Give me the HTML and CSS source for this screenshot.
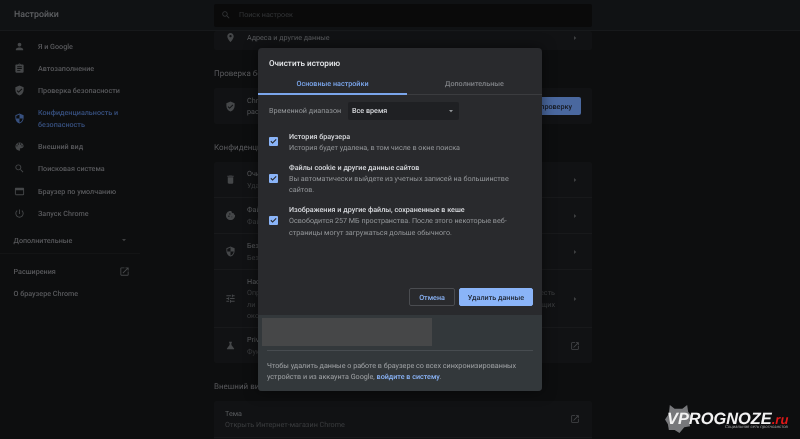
FILE: index.html
```html
<!DOCTYPE html>
<html lang="ru">
<head>
	<meta charset="UTF-8">
	<title>Настройки</title>
	<link rel="stylesheet" href="styles.css">
</head>
<body>
	<svg class="defs" width="0" height="0">
		<symbol id="i-person" viewBox="0 0 24 24"><path d="M12 12c2.21 0 4-1.79 4-4s-1.79-4-4-4-4 1.79-4 4 1.79 4 4 4zm0 2c-2.67 0-8 1.34-8 4v2h16v-2c0-2.66-5.33-4-8-4z"/></symbol>
		<symbol id="i-assignment" viewBox="0 0 24 24"><path d="M19 3h-4.18C14.4 1.84 13.3 1 12 1s-2.4.84-2.82 2H5c-1.1 0-2 .9-2 2v14c0 1.1.9 2 2 2h14c1.1 0 2-.9 2-2V5c0-1.1-.9-2-2-2zm-7 0c.55 0 1 .45 1 1s-.45 1-1 1-1-.45-1-1 .45-1 1-1zm2 14H7v-2h7v2zm3-4H7v-2h10v2zm0-4H7V7h10v2z"/></symbol>
		<symbol id="i-verified" viewBox="0 0 24 24"><path d="M12 1L3 5v6c0 5.55 3.84 10.74 9 12 5.16-1.26 9-6.45 9-12V5l-9-4zm-2 16l-4-4 1.41-1.41L10 14.17l6.59-6.59L18 9l-8 8z"/></symbol>
		<symbol id="i-security" viewBox="0 0 24 24"><path d="M12 1L3 5v6c0 5.55 3.84 10.74 9 12 5.16-1.26 9-6.45 9-12V5l-9-4zm0 10.99h7c-.53 4.12-3.28 7.79-7 8.94V12H5V6.3l7-3.11v8.8z"/></symbol>
		<symbol id="i-palette" viewBox="0 0 24 24"><path d="M12 3c-4.97 0-9 4.03-9 9s4.03 9 9 9c.83 0 1.5-.67 1.5-1.5 0-.39-.15-.74-.39-1.01-.23-.26-.38-.61-.38-.99 0-.83.67-1.5 1.5-1.5H16c2.76 0 5-2.24 5-5 0-4.42-4.03-8-9-8zm-5.5 9c-.83 0-1.5-.67-1.5-1.5S5.67 9 6.5 9 8 9.67 8 10.5 7.33 12 6.5 12zm3-4C8.67 8 8 7.33 8 6.5S8.67 5 9.5 5s1.5.67 1.5 1.5S10.33 8 9.5 8zm5 0c-.83 0-1.5-.67-1.5-1.5S13.67 5 14.5 5s1.5.67 1.5 1.5S15.33 8 14.5 8zm3 4c-.83 0-1.5-.67-1.5-1.5S16.67 9 17.5 9s1.5.67 1.5 1.5-.67 1.5-1.5 1.5z"/></symbol>
		<symbol id="i-search" viewBox="0 0 24 24"><path d="M15.5 14h-.79l-.28-.27C15.41 12.59 16 11.11 16 9.5 16 5.91 13.09 3 9.5 3S3 5.91 3 9.5 5.91 16 9.5 16c1.61 0 3.09-.59 4.23-1.57l.27.28v.79l5 4.99L20.49 19l-4.99-5zm-6 0C7.01 14 5 11.99 5 9.5S7.01 5 9.5 5 14 7.01 14 9.5 11.99 14 9.5 14z"/></symbol>
		<symbol id="i-web" viewBox="0 0 24 24"><path d="M20 4H4c-1.11 0-2 .9-2 2v12c0 1.1.89 2 2 2h16c1.1 0 2-.9 2-2V6c0-1.1-.89-2-2-2zm0 14H4V9h16v9z"/></symbol>
		<symbol id="i-power" viewBox="0 0 24 24"><path d="M13 3h-2v10h2V3zm4.83 2.17l-1.42 1.42C17.99 7.86 19 9.81 19 12c0 3.87-3.13 7-7 7s-7-3.13-7-7c0-2.19 1.01-4.14 2.58-5.42L6.17 5.17C4.23 6.82 3 9.26 3 12c0 4.97 4.03 9 9 9s9-4.03 9-9c0-2.74-1.23-5.18-3.17-6.83z"/></symbol>
		<symbol id="i-open" viewBox="0 0 24 24"><path d="M19 19H5V5h7V3H5c-1.11 0-2 .9-2 2v14c0 1.1.89 2 2 2h14c1.1 0 2-.9 2-2v-7h-2v7zM14 3v2h3.59l-9.83 9.83 1.41 1.41L19 6.41V10h2V3h-7z"/></symbol>
		<symbol id="i-place" viewBox="0 0 24 24"><path d="M12 2C8.13 2 5 5.13 5 9c0 5.25 7 13 7 13s7-7.75 7-13c0-3.87-3.13-7-7-7zm0 9.5c-1.38 0-2.5-1.12-2.5-2.5s1.12-2.5 2.5-2.5 2.5 1.12 2.5 2.5-1.12 2.5-2.5 2.5z"/></symbol>
		<symbol id="i-delete" viewBox="0 0 24 24"><path d="M6 19c0 1.1.9 2 2 2h8c1.1 0 2-.9 2-2V7H6v12zM19 4h-3.5l-1-1h-5l-1 1H5v2h14V4z"/></symbol>
		<symbol id="i-cookie" viewBox="0 0 24 24"><path d="M21.95 10.99c-1.79-.03-3.7-1.95-2.68-4.22-2.98 1-5.77-1.59-5.19-4.56C6.95.71 2 6.58 2 12c0 5.52 4.48 10 10 10 5.89 0 10.54-5.08 9.95-11.01zM8.5 15c-.83 0-1.5-.67-1.5-1.5S7.67 12 8.5 12s1.5.67 1.5 1.5S9.33 15 8.5 15zm2-5C9.67 10 9 9.33 9 8.5S9.67 7 10.5 7s1.5.67 1.5 1.5-.67 1.5-1.5 1.5zm4.5 6c-.55 0-1-.45-1-1s.45-1 1-1 1 .45 1 1-.45 1-1 1z"/></symbol>
		<symbol id="i-tune" viewBox="0 0 24 24"><path d="M3 17v2h6v-2H3zM3 5v2h10V5H3zm10 16v-2h8v-2h-8v-2h-2v6h2zM7 9v2H3v2h4v2h2V9H7zm14 4v-2H11v2h10zm-6-4h2V7h4V5h-4V3h-2v6z"/></symbol>
		<symbol id="i-flask" viewBox="0 0 24 24"><path d="M19.8 18.4L14 10.67V6.5l1.35-1.69c.26-.33.03-.81-.39-.81H9.04c-.42 0-.65.48-.39.81L10 6.5v4.17L4.2 18.4c-.49.66-.02 1.6.8 1.6h14c.82 0 1.29-.94.8-1.6z"/></symbol>
		<symbol id="i-right" viewBox="0 0 24 24"><path d="M9 6l7 6-7 6z"/></symbol>
		<symbol id="i-down" viewBox="0 0 24 24"><path d="M6 9l6 7 6-7z"/></symbol>
		<symbol id="i-check" viewBox="0 0 24 24"><path d="M9.5 18.2L3.8 12.5l2.2-2.2 3.5 3.5 8.5-8.5 2.2 2.2z"/></symbol>
	</svg>

	<div class="page">
		<header class="topbar">
			<div class="topbar-title">Настройки</div>
			<div class="search">
				<svg class="icon-sm"><use href="#i-search"/></svg>
				<span>Поиск настроек</span>
			</div>
		</header>

		<div class="main">
			<aside class="sidebar">
				<nav class="nav">
					<a class="nav-item"><svg class="icon"><use href="#i-person"/></svg><span>Я и Google</span></a>
					<a class="nav-item"><svg class="icon"><use href="#i-assignment"/></svg><span>Автозаполнение</span></a>
					<a class="nav-item"><svg class="icon"><use href="#i-verified"/></svg><span>Проверка безопасности</span></a>
					<a class="nav-item active"><svg class="icon"><use href="#i-security"/></svg><span>Конфиденциальность и безопасность</span></a>
					<a class="nav-item"><svg class="icon"><use href="#i-palette"/></svg><span>Внешний вид</span></a>
					<a class="nav-item"><svg class="icon"><use href="#i-search"/></svg><span>Поисковая система</span></a>
					<a class="nav-item"><svg class="icon"><use href="#i-web"/></svg><span>Браузер по умолчанию</span></a>
					<a class="nav-item"><svg class="icon"><use href="#i-power"/></svg><span>Запуск Chrome</span></a>
					<a class="nav-more"><span>Дополнительные</span><svg class="icon-xs"><use href="#i-down"/></svg></a>
					<a class="nav-link nav-link-first"><span>Расширения</span><svg class="icon"><use href="#i-open"/></svg></a>
					<a class="nav-link"><span>О браузере Chrome</span></a>
				</nav>
			</aside>

			<main class="content">
				<div class="card">
					<div class="row row-cut">
						<svg class="icon"><use href="#i-place"/></svg>
						<div class="row-text"><div class="row-title">Адреса и другие данные</div></div>
						<svg class="icon-xs"><use href="#i-right"/></svg>
					</div>
				</div>

				<h2 class="section-title">Проверка безопасности</h2>
				<div class="card">
					<div class="row">
						<svg class="icon"><use href="#i-verified"/></svg>
						<div class="row-text"><div class="row-title">Chrome поможет защитить вас от утечки данных,<br>расширений и других угроз.</div></div>
						<button class="check-btn">Выполнить проверку</button>
					</div>
				</div>

				<h2 class="section-title">Конфиденциальность и безопасность</h2>
				<div class="card">
					<div class="row row-first">
						<svg class="icon"><use href="#i-delete"/></svg>
						<div class="row-text"><div class="row-title">Очистить историю</div><div class="row-sub">Удалить файлы cookie и данные сайтов, очистить историю и кеш</div></div>
						<svg class="icon-xs"><use href="#i-right"/></svg>
					</div>
					<div class="row">
						<svg class="icon"><use href="#i-cookie"/></svg>
						<div class="row-text"><div class="row-title">Файлы cookie и другие данные сайтов</div><div class="row-sub">Файлы cookie сторонних сайтов заблокированы в режиме инкогнито</div></div>
						<svg class="icon-xs"><use href="#i-right"/></svg>
					</div>
					<div class="row">
						<svg class="icon"><use href="#i-security"/></svg>
						<div class="row-text"><div class="row-title">Безопасность</div><div class="row-sub">Безопасный просмотр и другие настройки безопасности</div></div>
						<svg class="icon-xs"><use href="#i-right"/></svg>
					</div>
					<div class="row row-tall">
						<svg class="icon"><use href="#i-tune"/></svg>
						<div class="row-text">
							<div class="row-title">Настройки сайтов</div>
							<div class="row-sub row-line">Определяет, какие данные могут использовать сайты, что они могут показывать, есть</div>
							<div class="row-sub row-line">ли у них доступ к местоположению и к камере, могут ли они показывать всплывающих</div>
							<div class="row-sub">окон и другое</div>
						</div>
						<svg class="icon-xs"><use href="#i-right"/></svg>
					</div>
					<div class="row">
						<svg class="icon"><use href="#i-flask"/></svg>
						<div class="row-text"><div class="row-title">Privacy Sandbox</div><div class="row-sub">Функции находятся на этапе тестирования</div></div>
						<svg class="icon-open"><use href="#i-open"/></svg>
					</div>
				</div>

				<h2 class="section-title">Внешний вид</h2>
				<div class="card">
					<div class="row">
						<div class="row-text"><div class="row-title">Тема</div><div class="row-sub">Открыть Интернет-магазин Chrome</div></div>
						<svg class="icon-open"><use href="#i-open"/></svg>
					</div>
					<div class="row"></div>
				</div>
			</main>
		</div>

		<div class="dialog">
			<div class="dialog-title">Очистить историю</div>
			<div class="tabs">
				<div class="tab active">Основные настройки</div>
				<div class="tab">Дополнительные</div>
			</div>
			<div class="dialog-body">
				<div class="range">
					<span class="range-label">Временной диапазон</span>
					<div class="select"><span>Все время</span><svg class="icon-xs"><use href="#i-down"/></svg></div>
				</div>
				<div class="option">
					<span class="checkbox"><svg><use href="#i-check"/></svg></span>
					<div class="option-text">
						<div class="option-title">История браузера</div>
						<div class="option-sub">История будет удалена, в том числе в окне поиска</div>
					</div>
				</div>
				<div class="option">
					<span class="checkbox"><svg><use href="#i-check"/></svg></span>
					<div class="option-text">
						<div class="option-title">Файлы cookie и другие данные сайтов</div>
						<div class="option-sub">Вы автоматически выйдете из учетных записей на большинстве сайтов.</div>
					</div>
				</div>
				<div class="option">
					<span class="checkbox"><svg><use href="#i-check"/></svg></span>
					<div class="option-text">
						<div class="option-title">Изображения и другие файлы, сохраненные в кеше</div>
						<div class="option-sub">Освободится 257 МБ пространства. После этого некоторые веб-страницы могут загружаться дольше обычного.</div>
					</div>
				</div>
			</div>
			<div class="dialog-actions">
				<button class="btn">Отмена</button>
				<button class="btn btn-primary">Удалить данные</button>
			</div>
			<div class="dialog-footer">
				<div class="redacted"></div>
				<div class="footer-note">Чтобы удалить данные о работе в браузере со всех синхронизированных устройств и из аккаунта Google, <a class="footer-link">войдите в систему</a>.</div>
			</div>
		</div>

		<div class="watermark">
			<svg class="wm-gear" viewBox="0 0 28 30"><path d="M5 1l5 4h8l5-4 1 7 4 5-3 4 1 6-6 1-5 6-5-3-6 0-1-6-3-5 4-6z"/></svg>
			<div class="wm-name">VPROGNOZE<span class="wm-ru">.ru</span></div>
			<div class="wm-tag">Социальная сеть прогнозистов</div>
		</div>
	</div>
</body>
</html>
```

FILE: styles.css
```css
* {
	box-sizing: border-box;
}

html,
body {
	margin: 0;
	height: 439px;
	overflow: hidden;
	background-color: #0d0e0f;
}

.defs {
	position: absolute;
}

.page {
	position: relative;
	height: 439px;
	overflow: hidden;
	font-family: Roboto, "Liberation Sans", sans-serif;
	font-size: 7.2px;
	line-height: 11.3px;
	text-rendering: geometricPrecision;
	color: #5a5c5f;
	background-color: #0d0e0f;
	filter: blur(0.35px);
}

.topbar {
	display: flex;
	align-items: center;
	height: 31px;
	background-color: #101214;
	border-bottom: 1px solid #17191b;
}

.topbar-title {
	width: 214px;
	padding: 1px 0 0 14px;
	font-size: 8.8px;
	font-weight: 500;
	color: #5f6164;
}

.search {
	display: flex;
	align-items: center;
	gap: 8px;
	width: 378px;
	height: 23px;
	padding-left: 7px;
	color: #333537;
	background-color: #0a0a0a;
	border-radius: 2px;
}

.icon,
.icon-sm,
.icon-open {
	width: 10px;
	height: 10px;
	flex: none;
	fill: #454749;
}

.icon {
	width: 11px;
	height: 11px;
}

.icon-sm {
	fill: #333537;
}

.icon-xs {
	width: 8px;
	height: 8px;
	flex: none;
	fill: #3e3f41;
}

.main {
	display: flex;
}

.sidebar {
	width: 214px;
	flex: none;
}

.nav {
	width: 140px;
	padding-top: 4px;
	font-weight: 500;
	color: #58595c;
}

.nav-item {
	display: flex;
	align-items: center;
	min-height: 22.3px;
	padding: 0 12px 0 13.5px;
	gap: 13.5px;
}

.nav-item.active {
	min-height: 33.6px;
	color: #37507f;
}

.nav-item.active .icon {
	fill: #37507f;
}

.nav-more {
	display: flex;
	align-items: center;
	justify-content: space-between;
	height: 26px;
	margin-top: 3px;
	padding: 0 12px 0 13.5px;
	border-bottom: 1px solid #131415;
}

.nav-link {
	display: flex;
	align-items: center;
	justify-content: space-between;
	height: 22.3px;
	padding: 0 10px 0 13.5px;
}

.nav-link-first {
	margin-top: 7px;
}

.content {
	width: 378px;
	flex: none;
}

.section-title {
	margin: 18px 0 8px;
	font-size: 8px;
	font-weight: 400;
	line-height: 12px;
	color: #58595c;
}

.card {
	background-color: #111214;
	border-radius: 2px;
}

.row {
	display: flex;
	align-items: center;
	height: 36px;
	padding: 0 13px 0 11px;
	border-top: 1px solid #18191b;
	gap: 11px;
}

.row-first,
.card > .row:first-child {
	border-top: 0;
}

.row-first {
	height: 35px;
}

.row-cut {
	height: 19px;
	padding-bottom: 6px;
}

.row-tall {
	height: 58px;
}

.row-text {
	flex: 1;
	min-width: 0;
	white-space: nowrap;
	overflow: hidden;
}

.row-title {
	color: #5a5c5f;
}

.row-sub {
	color: #3c3e40;
}

.row-line {
	width: 308px;
	white-space: normal;
	text-align-last: justify;
}

.check-btn {
	height: 18px;
	margin-right: -2px;
	padding: 0 9px;
	border: 0;
	border-radius: 2px;
	font: 500 7.2px Roboto, sans-serif;
	text-rendering: geometricPrecision;
	color: #15181f;
	background-color: #4a689f;
}

.icon-open {
	margin-right: -1px;
}

.dialog {
	position: absolute;
	top: 48px;
	left: 258px;
	display: flex;
	flex-direction: column;
	width: 284px;
	height: 343px;
	overflow: hidden;
	color: #94979a;
	background-color: #292a2d;
	border-radius: 4px;
	box-shadow: 0 0 14px rgba(0, 0, 0, 0.5);
}

.dialog-title {
	height: 30px;
	padding-left: 11px;
	font-size: 8.1px;
	font-weight: 500;
	line-height: 31px;
	color: #e8eaed;
}

.tabs {
	display: flex;
	height: 17px;
	border-bottom: 1px solid #3b3c3f;
}

.tab {
	width: 149px;
	text-align: center;
	font-weight: 500;
	color: #808387;
}

.tab + .tab {
	width: 135px;
}

.tab.active {
	height: 17px;
	color: #7ba6ec;
	border-bottom: 2px solid #7ba6ec;
}

.dialog-body {
	flex: 1;
	padding: 7px 11px 0;
}

.range {
	display: flex;
	align-items: center;
	margin-bottom: 10.5px;
}

.range-label {
	width: 79px;
	white-space: nowrap;
}

.select {
	display: flex;
	align-items: center;
	justify-content: space-between;
	width: 111px;
	height: 18px;
	padding: 0 4px;
	font-weight: 500;
	color: #d8dade;
	background-color: #1f2023;
	border-radius: 2px;
}

.select .icon-xs {
	fill: #94979a;
}

.option {
	display: flex;
	align-items: center;
	margin-bottom: 8.5px;
}

.checkbox {
	display: flex;
	width: 9px;
	height: 9px;
	flex: none;
	margin-right: 11px;
	background-color: #8ab4f8;
	border-radius: 1px;
}

.checkbox svg {
	width: 9px;
	height: 9px;
	fill: #292a2d;
}

.option-text {
	flex: 1;
	padding-right: 20px;
}

.option-title {
	font-weight: 500;
	color: #d8dade;
}

.option-sub {
	color: #94979a;
}

.dialog-actions {
	display: flex;
	justify-content: flex-end;
	gap: 4px;
	padding: 0 9px 9px;
}

.btn {
	width: 46px;
	height: 18px;
	padding: 0;
	font: 500 7.2px Roboto, sans-serif;
	text-rendering: geometricPrecision;
	color: #8ab4f8;
	background: none;
	border: 1px solid #4a4c50;
	border-radius: 2px;
}

.btn-primary {
	width: 74px;
	color: #1f2633;
	background-color: #8ab4f8;
	border-color: #8ab4f8;
}

.dialog-footer {
	height: 76px;
	padding: 3px 9px 0 4px;
	background-color: #33383b;
}

.redacted {
	width: 170px;
	height: 28px;
	background-color: #464748;
}

.footer-note {
	margin: 4px 0 0 5px;
	padding-top: 9px;
	color: #a0a3a6;
	border-top: 1px solid #474c50;
}

.footer-link {
	font-weight: 500;
	color: #8ab4f8;
}

.watermark {
	position: absolute;
	top: 404px;
	left: 665px;
	width: 135px;
	height: 30px;
}

.wm-gear {
	position: absolute;
	top: 0;
	left: 0;
	width: 27px;
	height: 29px;
	fill: #77787b;
}

.wm-name {
	position: absolute;
	top: 8px;
	left: 2px;
	font-family: "Liberation Sans", sans-serif;
	font-size: 16.4px;
	font-style: italic;
	font-weight: 700;
	line-height: 14px;
	white-space: nowrap;
	color: #f2f2f2;
}

.wm-ru {
	font-size: 13px;
	color: #e01818;
}

.wm-tag {
	position: absolute;
	top: 21px;
	left: 60px;
	font-size: 4.4px;
	font-style: italic;
	line-height: 6px;
	white-space: nowrap;
	color: #a0a0a0;
}
```
